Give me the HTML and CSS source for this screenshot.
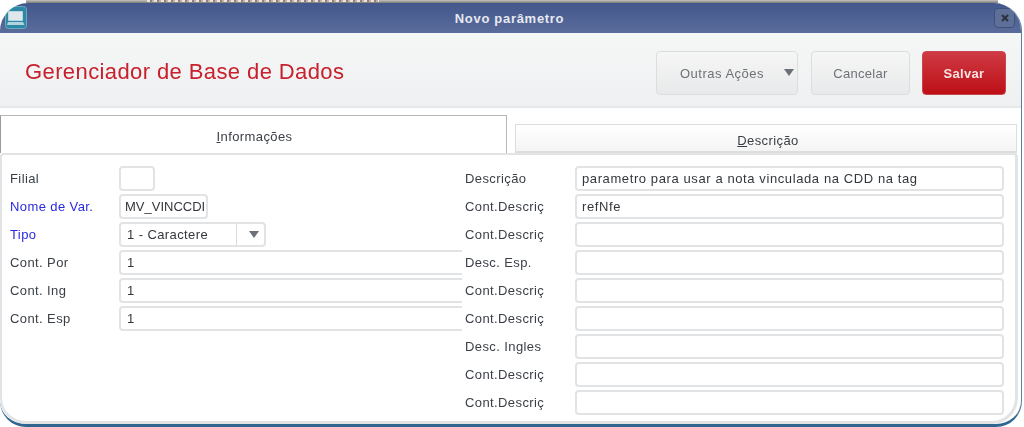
FILE: index.html
```html
<!DOCTYPE html>
<html lang="pt-BR">
<head>
    <meta charset="UTF-8">
    <meta name="viewport" content="width=device-width, initial-scale=1.0">
    <title>Novo parâmetro</title>
    <link rel="stylesheet" href="styles.css">
</head>
<body>

<div class="behind"><div class="behind-text"></div></div>

<div class="window">
    <header class="titlebar">
        <svg class="app-icon" width="22" height="23" viewBox="0 0 22 23">
            <rect x="0.500" y="0.500" width="21" height="22" rx="3" fill="#2c8aa6" stroke="#6fa9bf"/>
            <rect x="4" y="6" width="13" height="8" fill="#dfe7ec"/>
            <path d="M3.500 5.500h14v9h-14z" fill="none" stroke="#b9d6df"/>
            <path d="M3 16h15l1.500 3H2z" fill="#b5d3dc"/>
        </svg>
        <span class="title">Novo parâmetro</span>
        <button class="close">
            <svg width="10" height="10" viewBox="0 0 10 10"><path d="M2 2l6 6M8 2l-6 6" stroke="#2d3440" stroke-width="2.200"/></svg>
        </button>
    </header>

    <div class="toolbar">
        <h1 class="page-title">Gerenciador de Base de Dados</h1>
        <div class="actions">
            <button class="btn btn-more">Outras Ações<span class="arrow"></span></button>
            <button class="btn btn-cancel">Cancelar</button>
            <button class="btn btn-save">Salvar</button>
        </div>
    </div>

    <div class="tabs">
        <div class="tab tab-active"><span><u>I</u>nformações</span></div>
        <div class="tab"><span><u>D</u>escrição</span></div>
    </div>

    <main class="panel">
        <div class="col col-left">
            <div class="row">
                <label>Filial</label>
                <div class="field field-xs"></div>
            </div>
            <div class="row">
                <label class="required">Nome de Var.</label>
                <div class="field field-sm">MV_VINCCDI</div>
            </div>
            <div class="row">
                <label class="required">Tipo</label>
                <div class="field field-select">1 - Caractere<span class="select-btn"><span class="arrow"></span></span></div>
            </div>
            <div class="row">
                <label>Cont. Por</label>
                <div class="field field-long">1</div>
            </div>
            <div class="row">
                <label>Cont. Ing</label>
                <div class="field field-long">1</div>
            </div>
            <div class="row">
                <label>Cont. Esp</label>
                <div class="field field-long">1</div>
            </div>
        </div>
        <div class="col col-right">
            <div class="row"><label>Descrição</label><div class="field">parametro para usar a nota vinculada na CDD na tag</div></div>
            <div class="row"><label>Cont.Descriç</label><div class="field">refNfe</div></div>
            <div class="row"><label>Cont.Descriç</label><div class="field"></div></div>
            <div class="row"><label>Desc. Esp.</label><div class="field"></div></div>
            <div class="row"><label>Cont.Descriç</label><div class="field"></div></div>
            <div class="row"><label>Cont.Descriç</label><div class="field"></div></div>
            <div class="row"><label>Desc. Ingles</label><div class="field"></div></div>
            <div class="row"><label>Cont.Descriç</label><div class="field"></div></div>
            <div class="row"><label>Cont.Descriç</label><div class="field"></div></div>
        </div>
    </main>
</div>

</body>
</html>
```

FILE: styles.css
```css
html, body {
    margin: 0;
    height: 427px;
    overflow: hidden;
    background-color: #ffffff;
    font-family: "Liberation Sans", Arial, sans-serif;
    color: #3a3f46;
}

/* bout de la page derriere la fenetre */
.behind {
    height: 3px;
    margin: 0 26px;
    background: linear-gradient(to bottom, #c4c4c4, #7d7a74);
}

.behind-text {
    width: 232px;
    height: 2px;
    margin-left: 121px;
    background: repeating-linear-gradient(to right, #e9e6e0 0, #e9e6e0 3px, #8a7f92 3px, #8a7f92 5px, #c9b48f 5px, #c9b48f 7px);
}

/* FENETRE */
.window {
    width: 1022px;
    height: 424px;
    box-sizing: border-box;
    border-right: 1px solid #5b7ea6;
    border-bottom: 3px solid #2f6690;
    border-radius: 28px 28px 26px 26px;
    background-color: #ffffff;
    overflow: hidden;
    display: flex;
    flex-direction: column;
    filter: blur(0.4px);
}

.titlebar {
    height: 30px;
    flex-shrink: 0;
    display: flex;
    align-items: center;
    justify-content: center;
    position: relative;
    background: linear-gradient(to bottom, #43578c, #5a6c9b);
}

.app-icon {
    position: absolute;
    left: 5px;
    top: 3px;
}

.title {
    color: #e6e9f0;
    font-size: 13px;
    font-weight: bold;
    letter-spacing: 0.7px;
    margin-right: 2px;
}

.close {
    position: absolute;
    right: 6px;
    top: 5px;
    width: 21px;
    height: 20px;
    padding: 0;
    display: flex;
    align-items: center;
    justify-content: center;
    background-color: #5f7098;
    border: 1px solid #3e4f7c;
    border-radius: 4px;
}

/* BARRE D'ACTIONS */
.toolbar {
    height: 75px;
    flex-shrink: 0;
    box-sizing: border-box;
    padding: 18px 15px 0 25px;
    display: flex;
    justify-content: space-between;
    background: linear-gradient(to bottom, #f5f6f6, #eff0f1);
    border-bottom: 2px solid #e6e7e8;
}

.page-title {
    margin: 5px 0 0;
    font-size: 22px;
    line-height: 32px;
    font-weight: normal;
    color: #c8202c;
    letter-spacing: 0.4px;
}

.actions {
    display: flex;
    gap: 12px;
}

.btn {
    height: 44px;
    padding: 0;
    box-sizing: border-box;
    font-family: inherit;
    font-size: 13px;
    letter-spacing: 0.3px;
    color: #6d7278;
    background: linear-gradient(to bottom, #f6f6f6, #e8e9ea);
    border: 1px solid #dcdddd;
    border-radius: 4px;
    position: relative;
}

.btn-more {
    width: 142px;
    margin-right: 1px;
    padding-right: 10px;
    letter-spacing: 0.5px;
}

.btn-more .arrow {
    position: absolute;
    right: 3px;
    top: 17px;
}

.btn-cancel {
    width: 99px;
}

.btn-save {
    width: 84px;
    font-weight: bold;
    color: #f7e3e3;
    background: linear-gradient(to bottom, #cf3a44, #bd0f16);
    border-color: #c8464c;
}

.arrow {
    display: inline-block;
    width: 0;
    height: 0;
    border-left: 5px solid transparent;
    border-right: 5px solid transparent;
    border-top: 7px solid #6b7079;
}

/* ONGLETS */
.tabs {
    height: 45px;
    flex-shrink: 0;
    box-sizing: border-box;
    padding-top: 7px;
    display: flex;
    align-items: flex-end;
    gap: 8px;
}

.tab {
    flex: 1;
    height: 29px;
    box-sizing: border-box;
    display: flex;
    align-items: center;
    justify-content: center;
    margin-right: 4px;
    padding: 5px 0 0 4px;
    font-size: 13px;
    letter-spacing: 0.4px;
    background: linear-gradient(to bottom, #ffffff, #f4f4f4);
    border: 1px solid #dcdddd;
    border-bottom: 2px solid #dcdddd;
}

.tab-active {
    flex: none;
    width: 507px;
    height: 38px;
    margin-right: 0;
    padding: 3px 0 0 2px;
    background: #ffffff;
    border-color: #b5b6b7;
    border-left-color: #9a9b9c;
    border-bottom: none;
}

/* FORMULAIRE */
.panel {
    flex: 1;
    min-height: 0;
    margin-right: 3px;
    box-sizing: border-box;
    padding: 11px 11px 0 8px;
    display: flex;
    background-color: #ffffff;
    border: 1px solid #e2e3e4;
    border-width: 2px 3px 3px 2px;
    border-radius: 4px 4px 26px 26px;
}

.col {
    display: flex;
    flex-direction: column;
    gap: 3px;
}

.col-left {
    width: 452px;
    flex-shrink: 0;
    overflow: hidden;
}

.col-right {
    flex: 1;
    margin-left: 3px;
}

.row {
    display: flex;
    align-items: center;
    height: 25px;
    flex-shrink: 0;
}

.row label {
    width: 109px;
    flex-shrink: 0;
    font-size: 13px;
    letter-spacing: 0.4px;
    white-space: nowrap;
    overflow: hidden;
}

.col-right .row label {
    width: 110px;
}

.required {
    color: #2a2ae0;
}

.field {
    flex: 1;
    height: 25px;
    box-sizing: border-box;
    padding: 0 5px;
    display: flex;
    align-items: center;
    font-size: 13px;
    letter-spacing: 0.6px;
    white-space: nowrap;
    overflow: hidden;
    color: #33373c;
    background-color: #ffffff;
    border: 2px solid #e2e3e4;
    border-radius: 4px;
}

.field-xs {
    flex: none;
    width: 36px;
}

.field-sm {
    flex: none;
    width: 89px;
    padding: 0 4px;
    letter-spacing: 0;
}

.field-select {
    flex: none;
    width: 147px;
    padding: 0 0 0 6px;
    justify-content: space-between;
    letter-spacing: 0.4px;
}

.select-btn {
    width: 28px;
    height: 100%;
    box-sizing: border-box;
    padding-left: 7px;
    display: flex;
    align-items: center;
    justify-content: center;
    border-left: 1px solid #d9dadb;
}

.field-long {
    flex: none;
    width: 370px;
    padding: 0 6px;
}
```
